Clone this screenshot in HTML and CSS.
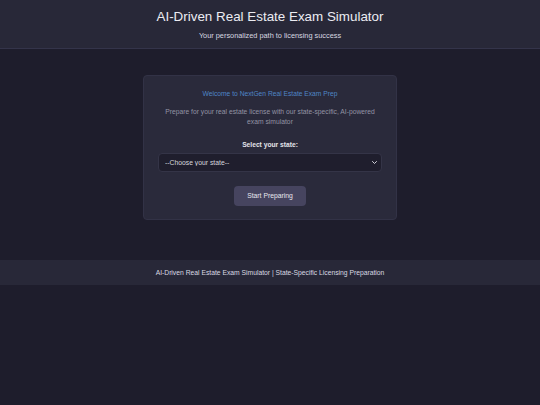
FILE: index.html
```html
<!DOCTYPE html>
<html lang="en">
<head>
<meta charset="utf-8">
<title>AI-Driven Real Estate Exam Simulator</title>
<link rel="stylesheet" href="styles.css">
</head>
<body>
<header class="site-header">
  <h1 class="site-title">AI-Driven Real Estate Exam Simulator</h1>
  <p class="site-subtitle">Your personalized path to licensing success</p>
</header>
<main class="main">
  <section class="card">
    <h2 class="card-title">Welcome to NextGen Real Estate Exam Prep</h2>
    <p class="card-text">Prepare for your real estate license with our state-specific, AI-powered exam simulator</p>
    <label class="field-label" for="state">Select your state:</label>
    <div class="select-wrap">
      <select id="state" class="state-select">
        <option>--Choose your state--</option>
      </select>
      <svg class="chevron" viewBox="0 0 10 6" width="5" height="3"><path d="M1 1l4 4 4-4" fill="none" stroke="#e6e6ee" stroke-width="1.8" stroke-linecap="round" stroke-linejoin="round"/></svg>
    </div>
    <button class="start-btn" type="button">Start Preparing</button>
  </section>
</main>
<footer class="site-footer">
  <p class="footer-text">AI-Driven Real Estate Exam Simulator | State-Specific Licensing Preparation</p>
</footer>
</body>
</html>
```
FILE: styles.css
```css
html, body {
  margin: 0;
  padding: 0;
}
body {
  background: #1e1d2c;
  font-family: "Liberation Sans", Arial, sans-serif;
  color: #e8e8ee;
  min-height: 405px;
}
.site-header {
  background: #282838;
  border-bottom: 1px solid #34344a;
  height: 48px;
  box-sizing: content-box;
  display: flex;
  flex-direction: column;
  align-items: center;
}
.site-title {
  margin: 8px 0 0;
  font-size: 13.4px;
  font-weight: 400;
  line-height: 18px;
  color: #ececf2;
}
.site-subtitle {
  margin: 5px 0 0;
  font-size: 7.35px;
  line-height: 10px;
  color: #d8d8e0;
}
.main {
  display: flex;
  justify-content: center;
  padding: 26px 0 40px;
}
.card {
  width: 254px;
  box-sizing: border-box;
  background: #2a2a3b;
  border: 1px solid #323246;
  border-radius: 4px;
  padding: 12px 14px 13.5px;
  display: flex;
  flex-direction: column;
  align-items: center;
}
.card-title {
  margin: 0;
  font-size: 6.7px;
  font-weight: 400;
  line-height: 12px;
  color: #4f86c6;
}
.card-text {
  margin: 6.5px 0 0;
  font-size: 6.75px;
  line-height: 10px;
  color: #9393a3;
  text-align: center;
}
.field-label {
  margin-top: 12px;
  font-size: 6.7px;
  font-weight: 700;
  line-height: 12px;
  color: #e4e4ea;
}
.select-wrap {
  position: relative;
  align-self: stretch;
  margin-top: 2px;
}
.state-select {
  display: block;
  width: 100%;
  height: 19px;
  box-sizing: border-box;
  appearance: none;
  -webkit-appearance: none;
  background: #1f1e2d;
  border: 1px solid #343447;
  border-radius: 4px;
  color: #d6d6de;
  font-family: "Liberation Sans", Arial, sans-serif;
  font-size: 6.8px;
  padding: 0 6px;
}
.chevron {
  position: absolute;
  right: 5px;
  top: 8px;
}
.start-btn {
  margin-top: 14px;
  width: 72px;
  height: 20px;
  border: none;
  border-radius: 4px;
  background: #46445f;
  color: #e6e6ee;
  font-family: "Liberation Sans", Arial, sans-serif;
  font-size: 6.8px;
  padding: 0;
}
.site-footer {
  background: #282838;
  height: 25px;
  display: flex;
  align-items: center;
  justify-content: center;
}
.footer-text {
  margin: 0;
  font-size: 6.75px;
  color: #d8d8e2;
}
```
